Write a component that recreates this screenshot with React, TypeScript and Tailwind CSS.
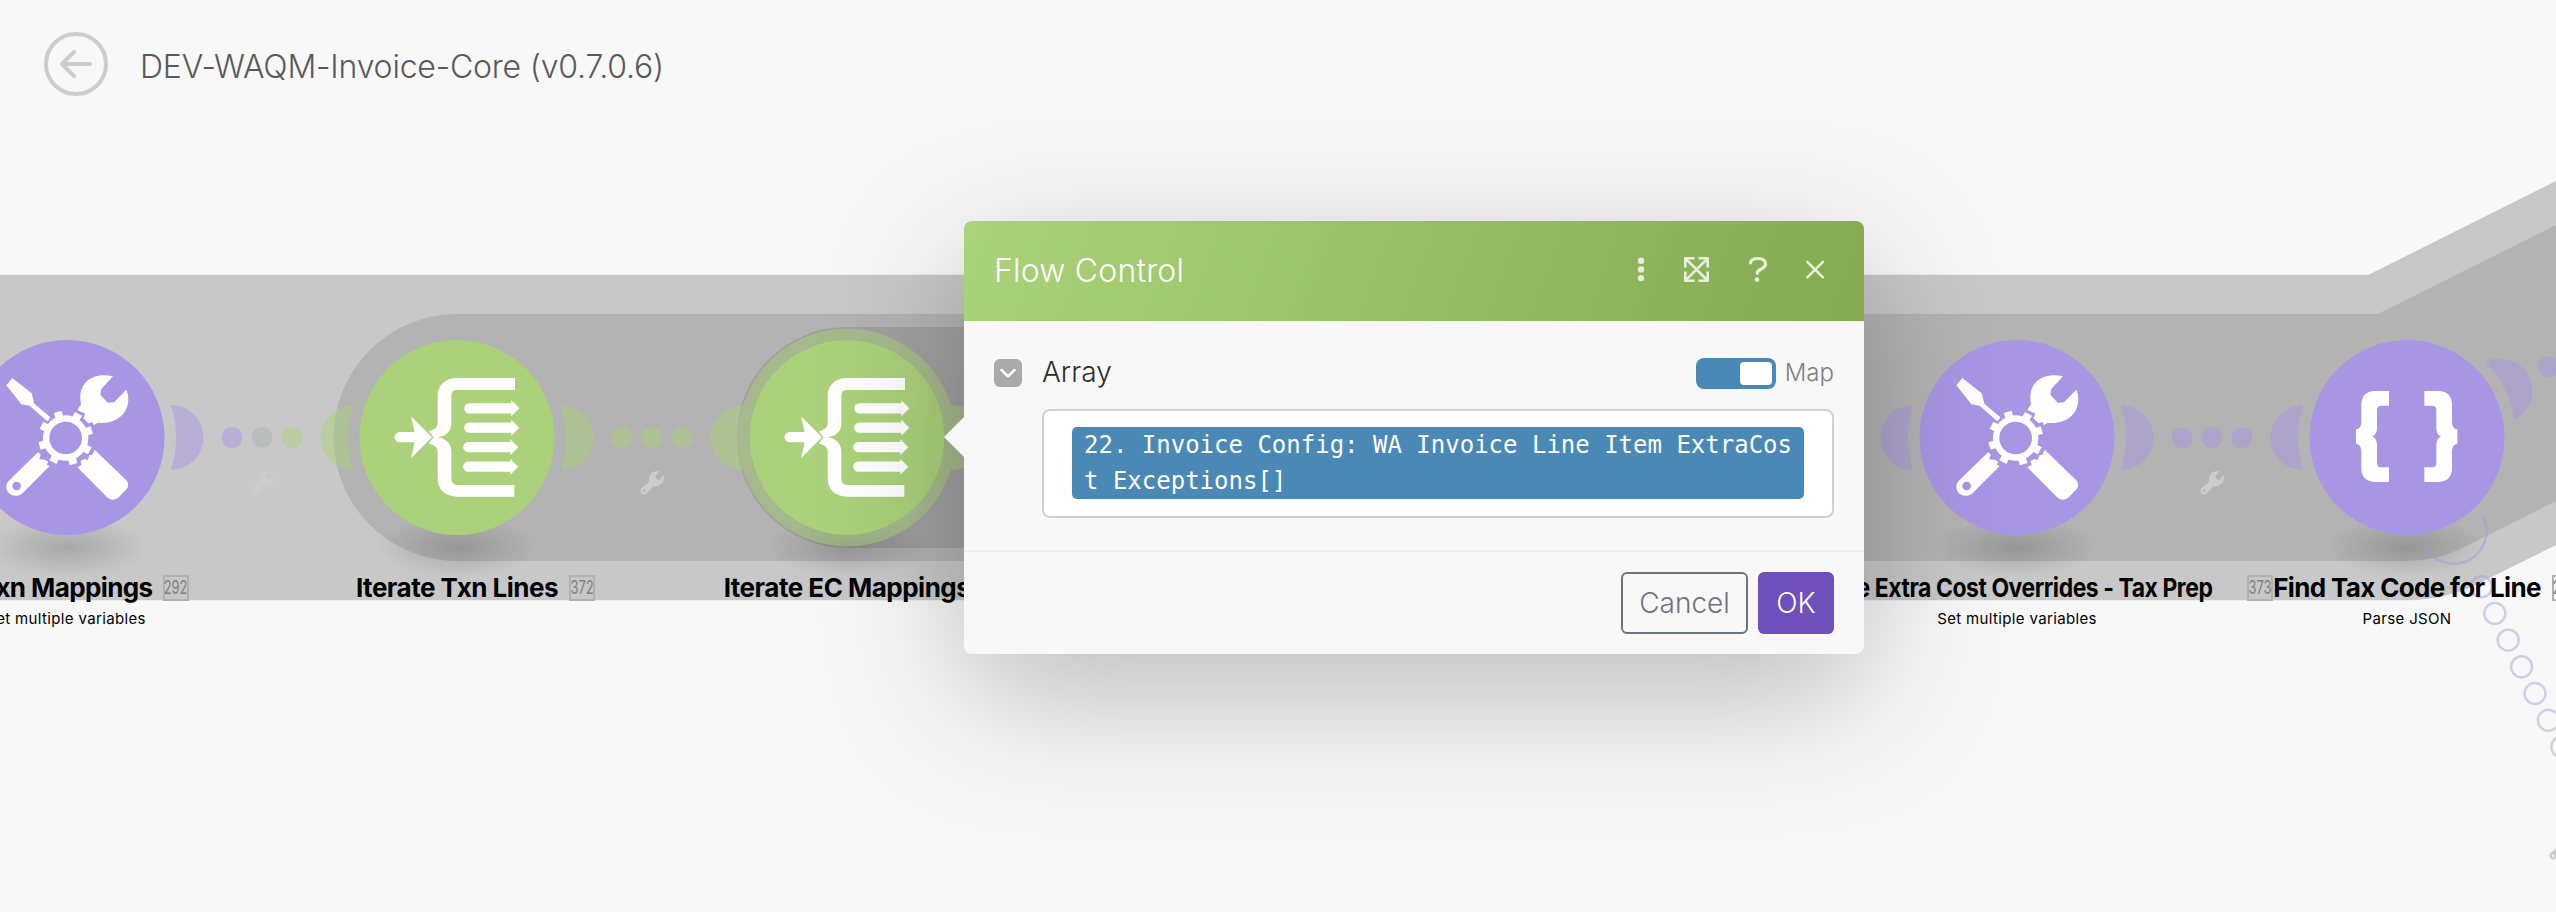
import React from "react";

const PURPLE = "#a896e5";
const GREEN = "#abd17a";
const CY = 437.5;

function ToolsGlyph({ x }: { x: number }) {
  const teeth = [0, 1, 2, 3, 4, 5, 6, 7];
  return (
    <g transform={`translate(${x} ${CY}) scale(0.33333) translate(-530 -532.5)`} fill="#fff">
      <path d="M366 354 L424 400 L432 431 L480 472 Q478 480 470 483 L418 437 L393 433 L348 376 Z" />
      <path d="M668 349 C610 335 567 365 570 418 L572 433 L561 450 L585 461 L579 475 L594 490 L607 486 L610 496 L622 488 C672 494 715 466 714 415 Q713 400 708 389 L671 427 L652 428 L630 404 L633 387 Z" />
      <circle cx="526" cy="534" r="58.5" fill="none" stroke="#fff" strokeWidth="19" />
      {teeth.map((i) => (
        <rect key={i} x="590" y="522" width="18" height="24" transform={`rotate(${-17 + i * 45} 526 534)`} />
      ))}
      <path
        fillRule="evenodd"
        d="M443 577 L451 583 L447 598 L463 599 L474 605 L469 614 L478 618 L398 698 C372 720 342 700 349 672 Q351 666 357 661 Z M392 678 a13 13 0 1 0 -26 0 a13 13 0 1 0 26 0 Z"
      />
      <path d="M613 569 L708 661 Q719 673 709 687 L683 714 Q667 725 652 713 L561 622 L574 614 L570 603 L582 597 L592 600 L597 586 L606 584 Z" />
    </g>
  );
}

function IteratorGlyph({ x }: { x: number }) {
  const rows = [
    [445, 3],
    [503, 3],
    [561.5, 0],
    [620, 0],
  ];
  return (
    <g transform={`translate(${x} ${CY}) scale(0.33333) translate(-740 -532.5)`} fill="#fff">
      <path d="M914 354 H740 C705 354 682 375 682 408 V490 C682 502 672 510 655 514 L670 532 L655 550 C672 555 682 562 682 575 V655 C682 690 705 710 740 710 H912 V675 H742 C730 675 723 668 723 655 V575 C723 550 705 534 680 532 C705 530 723 517 723 490 V408 C723 396 729 390 740 390 H914 Z" />
      <path d="M568 516 H613 L602 469 L665 531.5 L602 595 L613 547 H568 A15.5 15.5 0 0 1 568 516 Z" />
      {rows.map(([y, d]) => (
        <path
          key={y}
          transform={`translate(${d} ${y})`}
          d="M774 -15.5 H900 V-24 L924 0 L900 24 V15.5 H774 A15.5 15.5 0 0 1 774 -15.5 Z"
        />
      ))}
    </g>
  );
}

function JsonGlyph({ x }: { x: number }) {
  const brace =
    "M567 693 H525 Q484 695 484 735 V785 Q484 806 468 808 V851 Q484 853 484 874 V925 Q484 964 525 966 H567 V922 H545 Q531 922 531 908 V855 Q531 836 517 829.5 Q531 823 531 804 V750 Q531 737 545 737 H567 Z";
  return (
    <g transform={`translate(${x} ${CY}) scale(0.33333) translate(-621 -832.5)`} fill="#fff">
      <path d={brace} />
      <path d={brace} transform="translate(1240 0) scale(-1 1)" />
    </g>
  );
}

function Wrench({ x, y }: { x: number; y: number }) {
  return (
    <g transform={`translate(${x} ${y}) scale(0.33333) translate(-120 -634)`}>
      <path
        fill="#cccccc"
        fillRule="evenodd"
        d="M178 636 C158 630 143 647 148 666 L124 686 A11 11 0 0 0 139 702 L161 679 C180 683 197 667 191 647 L179 660 Q168 660 166 649 Z M135.500 693 a3.500 3.500 0 1 0 -7 0 a3.500 3.500 0 1 0 7 0 Z"
      />
    </g>
  );
}

function Ear({ x, angle, fill }: { x: number; angle: number; fill: string }) {
  return (
    <path
      transform={`translate(${x} ${CY}) rotate(${angle})`}
      d="M104 -32.500 A32.500 32.500 0 1 1 104 32.500 A109 109 0 0 0 104 -32.500 Z"
      fill={fill}
      fillOpacity="0.5"
    />
  );
}

function Dots({ x, fills }: { x: number; fills: string[] }) {
  return (
    <>
      {fills.map((f, i) => (
        <circle key={i} cx={x + 165 + i * 30} cy={CY} r="10.500" fill={f} fillOpacity="0.5" />
      ))}
    </>
  );
}

function Disc({ x, fill }: { x: number; fill: string }) {
  return (
    <>
      <ellipse cx={x} cy="547" rx="82" ry="31" fill="url(#ground)" />
      <circle cx={x} cy={CY} r="97.500" fill={fill} />
    </>
  );
}

function Canvas() {
  const trail = [0, 1, 2, 3, 4, 5, 6];
  const trailColors = ["#a99fdd", "#a9a0d9", "#a9a1d4", "#aaa3cf", "#aaa5c9", "#aba7c3", "#aba9bd"];
  return (
    <svg className="absolute inset-0" width="2556" height="912" viewBox="0 0 2556 912">
      <defs>
        <radialGradient id="ground">
          <stop offset="0" stopColor="#000" stopOpacity="0.16" />
          <stop offset="0.5" stopColor="#000" stopOpacity="0.08" />
          <stop offset="1" stopColor="#000" stopOpacity="0" />
        </radialGradient>
      </defs>
      <g fill="none" strokeLinejoin="round" strokeLinecap="round">
        <path d="M-200 437.500 H2407 L2807 237.500" stroke="#c8c8c8" strokeWidth="325.500" />
        <path d="M457 437.500 H2407 L2807 237.500" stroke="#b3b3b3" strokeWidth="247" />
        <path d="M847 437.500 H1500" stroke="#a0a0a0" strokeWidth="221" />
      </g>

      <Ear x={67} angle={0} fill={PURPLE} />
      <Dots x={67} fills={[PURPLE, "#a9b4b0", GREEN]} />
      <Ear x={457} angle={180} fill={GREEN} />
      <Ear x={457} angle={0} fill={GREEN} />
      <Dots x={457} fills={[GREEN, GREEN, GREEN]} />
      <Ear x={847} angle={180} fill={GREEN} />
      <Ear x={847} angle={0} fill={GREEN} />
      <Ear x={2017} angle={180} fill={PURPLE} />
      <Ear x={2017} angle={0} fill={PURPLE} />
      <Dots x={2017} fills={[PURPLE, PURPLE, PURPLE]} />
      <Ear x={2407} angle={180} fill={PURPLE} />
      <Ear x={2407} angle={-26.57} fill={PURPLE} />
      <circle cx="2548.700" cy="366.700" r="10.500" fill={PURPLE} fillOpacity="0.5" />

      <Wrench x={250} y={471} />
      <Wrench x={640} y={471} />
      <Wrench x={2200} y={471} />
      <Wrench x={2549} y={836} />

      <Disc x={67} fill={PURPLE} />
      <ToolsGlyph x={67} />
      <Disc x={457} fill={GREEN} />
      <IteratorGlyph x={457} />
      <Disc x={847} fill={GREEN} />
      <circle cx="847" cy={CY} r="103.250" fill="none" stroke={GREEN} strokeOpacity="0.5" strokeWidth="11.500" />
      <IteratorGlyph x={847} />
      <Disc x={2017} fill={PURPLE} />
      <ToolsGlyph x={2017} />
      <Disc x={2407} fill={PURPLE} />
      <JsonGlyph x={2407} />

      <path
        d="M2483 516 A32.500 32.500 0 1 1 2424.300 545.700"
        fill="none"
        stroke={PURPLE}
        strokeOpacity="0.5"
        strokeWidth="2.400"
      />
      {trail.map((i) => (
        <circle
          key={i}
          cx={2481.4 + i * 13.4}
          cy={586.7 + i * 26.7}
          r="10.500"
          fill="none"
          stroke={trailColors[i]}
          strokeOpacity="0.5"
          strokeWidth="2.400"
        />
      ))}
    </svg>
  );
}

const sub = "text-[15px] leading-[20px] tracking-[0.35px] text-black";
const name = "text-[26px] leading-[32px] font-bold text-black";
const badge =
  "absolute top-[575px] flex h-[26px] w-[26px] items-center justify-center border-2 border-[#b0b0b0] text-[#808080]";

function Caption({ className, children, note }: { className: string; children: React.ReactNode; note?: string }) {
  return (
    <div className={`absolute top-[572px] flex w-[400px] flex-col gap-[5px] whitespace-nowrap ${className}`}>
      <div className={name}>{children}</div>
      {note && <div className={`w-full text-center ${sub}`}>{note}</div>}
    </div>
  );
}

function Badge({ className, children }: { className: string; children: React.ReactNode }) {
  return (
    <div className={`${badge} ${className}`}>
      <span className="scale-x-[0.72] text-[18px] leading-none font-normal">{children}</span>
    </div>
  );
}

function Dialog() {
  return (
    <section className="absolute top-[221px] left-[964px] flex h-[433px] w-[900px] flex-col rounded-lg bg-[#f8f8f8] shadow-[0_40px_140px_rgba(0,0,0,0.25)]">
      <svg className="absolute top-[196px] -left-[20px]" width="21" height="40" viewBox="0 0 21 40">
        <path d="M21 -1 L0 20 L21 41 Z" fill="#f8f8f8" />
      </svg>
      <header className="flex h-[100px] shrink-0 items-center justify-between rounded-t-lg bg-[linear-gradient(110deg,#abd37a_0%,#83aa51_100%)] pr-[38px] pl-[30px]">
        <h2 className="text-[32px] font-[350] tracking-[0.2px] text-white">Flow Control</h2>
        <svg width="190" height="30" viewBox="1636 256 190 30" fill="none" stroke="#e8f0dc" strokeWidth="2.600" strokeLinecap="round" strokeLinejoin="round">
          <g fill="#e8f0dc" stroke="none">
            <circle cx="1641" cy="260.700" r="3.200" />
            <circle cx="1641" cy="269.400" r="3.200" />
            <circle cx="1641" cy="278.100" r="3.200" />
            <circle cx="1757" cy="279.600" r="2.300" />
          </g>
          <path d="M1685.300 266.300 V258.300 H1693.300 M1699.700 258.300 H1707.700 V266.300 M1707.700 272.700 V280.700 H1699.700 M1693.300 280.700 H1685.300 V272.700 M1686 259 L1707 280 M1707 259 L1686 280" strokeLinecap="square" strokeWidth="2.600" />
          <path d="M1750.500 262.800 Q1751 258.500 1758 258.500 Q1765.500 258.500 1765.500 264.300 C1765.500 269.500 1757.200 268.500 1757.200 273.300" strokeWidth="3.200" />
          <path d="M1807.300 261.800 L1823 277.300 M1823 261.800 L1807.300 277.300" strokeWidth="2.500" />
        </svg>
      </header>

      <div className="flex h-[229px] shrink-0 flex-col px-[30px] pt-[37px]">
        <div className="flex h-[31px] items-center">
          <span className="mb-px flex size-7 items-center justify-center rounded-md bg-[#aaaaaa]">
            <svg width="16" height="10" viewBox="0 0 16 10" fill="none" stroke="#fff" strokeWidth="2.500" strokeLinecap="round" strokeLinejoin="round">
              <path d="M1.500 2 L8 8.300 L14.500 2" />
            </svg>
          </span>
          <span className="mb-[2px] ml-[20px] text-[28px] leading-[31px] font-[350] text-[#2d2d2d]">Array</span>
          <span className="ml-auto flex h-[31px] w-20 items-center justify-end rounded-lg bg-[#4a89b6] p-1">
            <span className="h-[23px] w-8 rounded bg-white" />
          </span>
          <span className="mb-[2px] ml-[9px] text-[24px] leading-[31px] font-[350] text-[#808080]">Map</span>
        </div>
        <div className="mt-[20px] ml-12 flex h-[109px] items-start rounded-lg border-2 border-[#d0d0d0] bg-white px-7 pt-4">
          <p className="h-[72px] w-[732px] rounded-[5px] bg-[#4a89b6] pl-3 font-['DejaVu_Sans_Mono',monospace] text-[24px] leading-[36px] whitespace-pre text-white">
            {"22. Invoice Config: WA Invoice Line Item ExtraCos\nt Exceptions[]"}
          </p>
        </div>
      </div>

      <footer className="flex grow items-start justify-end gap-[10px] border-t-2 border-[#eeeeee] px-[30px] pt-5 text-[28px] font-[350]">
        <button className="h-[62px] w-[127px] rounded-md border-2 border-[#6c757d] text-[#6c757d]">Cancel</button>
        <button className="h-[62px] w-[76px] rounded-md bg-[#6e4fbb] text-white">OK</button>
      </footer>
    </section>
  );
}

export default function App() {
  return (
    <main className="relative h-[912px] w-[2556px] overflow-hidden bg-[#f8f8f8] font-['Inter',sans-serif]">
      <Canvas />

      <Caption className="-left-[134px] items-center tracking-[-0.6px]" note="Set multiple variables">Txn Mappings</Caption>
      <Badge className="left-[163px]">292</Badge>
      <Caption className="left-[257px] items-center tracking-[-0.5px]">Iterate Txn Lines</Caption>
      <Badge className="left-[569px]">372</Badge>
      <Caption className="left-[647px] items-center tracking-[-0.5px]">Iterate EC Mappings</Caption>
      <Caption className="left-[1817px] items-end tracking-[-0.5px]" note="Set multiple variables">
        <span className="mr-[5px] block origin-right scale-x-[0.882]">e Extra Cost Overrides - Tax Prep</span>
      </Caption>
      <Badge className="left-[2247px]">373</Badge>
      <Caption className="left-[2207px] items-center tracking-[-0.65px]" note="Parse JSON">Find Tax Code for Line</Caption>
      <Badge className="left-[2552px]">293</Badge>

      <div className="relative flex items-center gap-[32px] pt-8 pl-11">
        <svg width="64" height="64" viewBox="0 0 64 64" fill="none" stroke="#cccccc" strokeWidth="4" strokeLinecap="round" strokeLinejoin="round">
          <circle cx="32" cy="32" r="30" />
          <path d="M46 32 H18 M30 20 L18 32 L30 44" />
        </svg>
        <h1 className="pt-[5px] text-[32px] leading-[40px] font-light tracking-[-0.2px] text-[#5a5a5a]">DEV-WAQM-Invoice-Core (v0.7.0.6)</h1>
      </div>

      <Dialog />
    </main>
  );
}
